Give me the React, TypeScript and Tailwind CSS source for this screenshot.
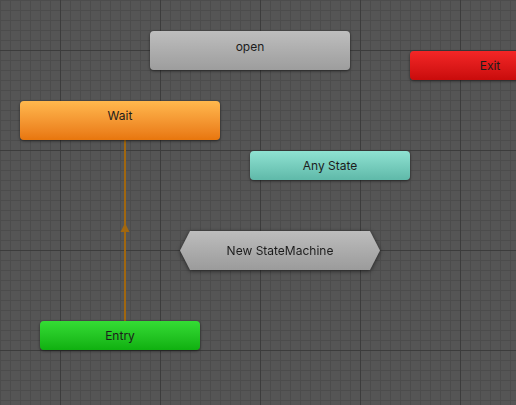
import type { ReactNode } from "react";

type NodeProps = {
  x: number;
  y: number;
  w: number;
  h: number;
  tone: string;
  textY?: string;
  children: ReactNode;
};

function Grid() {
  const minorX = Array.from({ length: 52 }, (_, i) => i * 10);
  const minorY = Array.from({ length: 41 }, (_, i) => i * 10);
  const majorX = [60, 160, 260, 360, 460];
  const majorY = [50, 150, 250, 350];

  return (
    <svg className="absolute inset-0" width={516} height={405}>
      {minorX.map((x) => (
        <line key={`vx${x}`} x1={x + 0.5} y1={0} x2={x + 0.5} y2={405} stroke="#4c4c4c" />
      ))}
      {minorY.map((y) => (
        <line key={`hy${y}`} x1={0} y1={y + 0.5} x2={516} y2={y + 0.5} stroke="#4c4c4c" />
      ))}
      {majorX.map((x) => (
        <line key={`mx${x}`} x1={x + 0.5} y1={0} x2={x + 0.5} y2={405} stroke="#3c3c3c" />
      ))}
      {majorY.map((y) => (
        <line key={`my${y}`} x1={0} y1={y + 0.5} x2={516} y2={y + 0.5} stroke="#3c3c3c" />
      ))}
    </svg>
  );
}

function StateNode({ x, y, w, h, tone, textY = "items-center", children }: NodeProps) {
  return (
    <div
      className={`absolute flex justify-center rounded-[4px] text-[12px] text-[#1c1c1c] shadow-[0_1px_3px_rgba(0,0,0,0.55)] ${tone} ${textY}`}
      style={{ left: x, top: y, width: w, height: h }}
    >
      {children}
    </div>
  );
}

function Transition() {
  // Entry -> Wait, drawn as a line with an arrowhead half way up
  return (
    <svg className="absolute inset-0" width={516} height={405}>
      <line x1={125} y1={140} x2={125} y2={321} stroke="#a1670f" strokeWidth={2} />
      <polygon points="125,223 120.5,232 129.5,232" fill="#a1670f" />
    </svg>
  );
}

export default function App() {
  return (
    <div
      className="relative h-[405px] w-[516px] overflow-hidden bg-[#555555]"
      style={{ fontFamily: "Inter, 'Noto Sans', sans-serif" }}
    >
      <Grid />
      <Transition />

      <StateNode x={150} y={31} w={200} h={39} tone="bg-gradient-to-b from-[#bebebe] to-[#9d9d9d]" textY="items-start pt-[7px]">
        open
      </StateNode>

      <StateNode x={410} y={51} w={160} h={29} tone="bg-gradient-to-b from-[#f42626] to-[#c90b0b]">
        Exit
      </StateNode>

      <StateNode x={20} y={101} w={200} h={39} tone="bg-gradient-to-b from-[#ffb84d] to-[#e8760b]" textY="items-start pt-[6px]">
        Wait
      </StateNode>

      <StateNode x={250} y={151} w={160} h={29} tone="bg-gradient-to-b from-[#8fe2d2] to-[#5fb9a9]">
        Any State
      </StateNode>

      <div className="absolute left-[180px] top-[231px] h-[39px] w-[200px] drop-shadow-[0_1px_2px_rgba(0,0,0,0.6)]">
        <div className="flex h-full w-full items-center justify-center bg-gradient-to-b from-[#bdbdbd] to-[#9b9b9b] text-[12px] text-[#1c1c1c] [clip-path:polygon(10px_0,190px_0,200px_50%,190px_100%,10px_100%,0_50%)]">
          New StateMachine
        </div>
      </div>

      <StateNode x={40} y={321} w={160} h={29} tone="bg-gradient-to-b from-[#34dc34] to-[#0fb00f]">
        Entry
      </StateNode>
    </div>
  );
}
